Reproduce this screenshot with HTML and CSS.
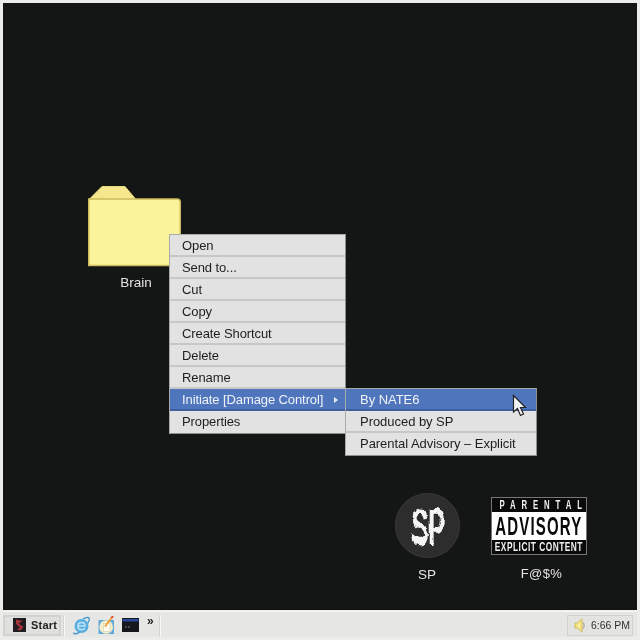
FILE: index.html
```html
<!DOCTYPE html>
<html lang="en">
<head>
  <meta charset="UTF-8" />
  <title>Brain - Desktop</title>
  <link rel="stylesheet" href="styles.css">
</head>
<body>
  <svg class="defs" width="0" height="0">
    <filter id="rough" x="-20%" y="-20%" width="140%" height="140%">
      <feTurbulence type="turbulence" baseFrequency="0.1" numOctaves="2" seed="4"/>
      <feDisplacementMap in="SourceGraphic" scale="4" xChannelSelector="R" yChannelSelector="G"/>
    </filter>
  </svg>

  <div class="screen">
    <div class="desktop">
      <div class="icon icon-folder">
        <svg class="folder-art" width="93" height="81" viewBox="0 0 93 81">
          <path d="M1 13.500 L14 0.500 H37 L48 13.500 Z" fill="#f6e78e" stroke="#e6d67c" stroke-width="1"/>
          <path d="M0.750 13 H89 Q92.250 13 92.250 16 V79.500 H0.750 Z" fill="#fbf39c" stroke="#cdbb5c" stroke-width="1.500"/>
        </svg>
        <span class="icon-label">Brain</span>
      </div>

      <div class="icon icon-sp">
        <div class="sp-logo"><span class="sp-mark">SP</span></div>
        <span class="icon-label">SP</span>
      </div>

      <div class="icon icon-pa">
        <div class="pa-logo">
          <div class="pa-top"><span>PARENTAL</span></div>
          <div class="pa-mid"><span>ADVISORY</span></div>
          <div class="pa-bot"><span>EXPLICIT CONTENT</span></div>
        </div>
        <span class="icon-label pa-label">F@$%</span>
      </div>

      <ul class="menu menu-main">
        <li>Open</li>
        <li>Send to...</li>
        <li>Cut</li>
        <li>Copy</li>
        <li>Create Shortcut</li>
        <li>Delete</li>
        <li>Rename</li>
        <li class="active">Initiate [Damage Control]<span class="arrow"></span></li>
        <li>Properties</li>
      </ul>

      <ul class="menu menu-sub">
        <li class="active">By NATE6</li>
        <li>Produced by SP</li>
        <li>Parental Advisory – Explicit</li>
      </ul>

      <svg class="cursor" width="16" height="24" viewBox="0 0 16 24">
        <path d="M1.500 1.500 V18 L5.500 14.500 L8.500 21.500 L11.500 20 L8.500 13.500 H13.500 Z" fill="#f2f3f6" stroke="#222" stroke-width="1.200"/>
      </svg>
    </div>

    <div class="taskbar">
      <button class="start">
        <svg width="13" height="14" viewBox="0 0 13 14">
          <rect width="13" height="14" fill="#201c20"/>
          <path d="M3 1.500 L9.500 3 L5.500 5.500 L10.500 9 L7.500 12.500 L4 11.500 L7 9.500 L3 6 Z" fill="#a8333c"/>
        </svg>
        <span>Start</span>
      </button>
      <span class="sep"></span>
      <div class="quick">
        <svg width="18" height="19" viewBox="0 0 18 19">
          <path d="M1 16.500 C0 19 5 18 9 14.500 C13 11 17.500 4 16 2 C15 0.800 12.500 1.500 10 3" fill="none" stroke="#3f93cb" stroke-width="1.300"/>
          <circle cx="8.500" cy="10" r="7" fill="#58aee0"/>
          <path d="M5 10 H12 C12 7.500 10.500 6.500 8.500 6.500 C6.300 6.500 5 8 5 10 C5 12.300 6.500 13.800 8.500 13.800 C10 13.800 11 13.300 11.800 12.300" fill="none" stroke="#bfe4f6" stroke-width="1.600"/>
        </svg>
        <svg width="17" height="19" viewBox="0 0 17 19">
          <rect x="0.500" y="4" width="15.500" height="14" fill="#62abd9"/>
          <circle cx="8.200" cy="11" r="6.800" fill="#f8efc6"/>
          <rect x="5.500" y="7.500" width="6.500" height="8" fill="#fdfbee" stroke="#cfcdb8" stroke-width="0.600"/>
          <path d="M7 10.500 L13.500 2" stroke="#eda23c" stroke-width="2"/>
          <path d="M13.500 2 L15 0" stroke="#d9483c" stroke-width="2"/>
        </svg>
        <svg width="17" height="14" viewBox="0 0 17 14">
          <rect width="17" height="14" fill="#15171c"/>
          <rect x="0.500" y="1" width="16" height="2.500" fill="#2c4a9c"/>
          <path d="M3 9 H5 M6 9 H8" stroke="#6f7480" stroke-width="1"/>
        </svg>
        <span class="more">»</span>
      </div>
      <span class="sep"></span>
      <div class="tray">
        <svg width="11" height="15" viewBox="0 0 11 15">
          <path d="M1 5 H3.500 L8 0.800 V14.200 L3.500 10 H1 Z" fill="#f4e27a" stroke="#c8b250" stroke-width="0.800"/>
          <path d="M5 5.500 V9.500" stroke="#fbf6c8" stroke-width="1.500"/>
          <path d="M9.500 4.500 Q10.800 7.500 9.500 10.500" fill="none" stroke="#9a9a80" stroke-width="1"/>
        </svg>
        <span class="clock">6:66 PM</span>
      </div>
    </div>
  </div>
</body>
</html>
```

FILE: styles.css
```css
* {
  box-sizing: border-box;
}

html, body {
  margin: 0;
  padding: 0;
  background: #ececea;
}

body {
  font-family: "Liberation Sans", Arial, sans-serif;
  font-size: 13px;
  color: #222;
}

.defs {
  display: block;
  height: 0;
}

.screen {
  width: 640px;
  height: 640px;
  padding: 3px;
  display: flex;
  flex-direction: column;
  overflow: hidden;
  filter: blur(0.3px);
}

.desktop {
  position: relative;
  flex: 1;
  background: #141515;
  overflow: hidden;
}

/* desktop icons, coordinates are relative to .desktop */
.icon {
  position: absolute;
  display: flex;
  flex-direction: column;
  align-items: center;
}

.icon-label {
  color: #e4e4e4;
  font-size: 13.500px;
  line-height: 16px;
}

.icon-folder {
  left: 85px;
  top: 183px;
  width: 96px;
  gap: 8px;
}

.folder-art {
  align-self: flex-start;
}

.icon-sp {
  left: 391px;
  top: 490px;
  width: 66px;
  gap: 9px;
}

.sp-logo {
  width: 65px;
  height: 65px;
  border-radius: 50%;
  background: #2d2d2d;
  border: 1px solid #3a3a3a;
  display: flex;
  align-items: center;
  justify-content: center;
}

.sp-mark {
  color: #f4f4f4;
  font-weight: bold;
  font-size: 30px;
  line-height: 1;
  letter-spacing: -1px;
  padding: 4px;
  filter: url(#rough);
  transform: scale(0.88, 1.7);
}

.icon-pa {
  left: 488px;
  top: 494px;
  width: 96px;
  gap: 11px;
}

.pa-logo {
  width: 96px;
  height: 58px;
  background: #0a0a0a;
  border: 1px solid #777;
  color: #f2f2f2;
  display: flex;
  flex-direction: column;
  font-weight: bold;
}

.pa-top, .pa-mid, .pa-bot {
  display: flex;
  justify-content: center;
  white-space: nowrap;
}

.pa-top span, .pa-mid span, .pa-bot span {
  flex-shrink: 0;
  display: block;
}

.pa-top {
  height: 14px;
  font-size: 13px;
  line-height: 14px;
}

.pa-top span {
  letter-spacing: 9.800px;
  margin-right: -9.800px;
  transform: scaleX(0.6);
}

.pa-mid {
  height: 28px;
  background: #fff;
  color: #0a0a0a;
  font-size: 25px;
  line-height: 28px;
}

.pa-mid span {
  letter-spacing: 2px;
  transform: scaleX(0.6);
}

.pa-bot {
  flex: 1;
  font-size: 13px;
  line-height: 14px;
}

.pa-bot span {
  letter-spacing: 0.800px;
  transform: scaleX(0.64);
}

.pa-label {
  font-size: 13px;
  letter-spacing: 0.400px;
  margin-left: 5px;
}

/* context menus */
.menu {
  position: absolute;
  margin: 0;
  padding: 0;
  list-style: none;
  background: #e1e2e1;
  border: 1px solid #8d8f8e;
  border-top-color: #a9abaa;
  border-left-color: #a9abaa;
}

.menu li {
  position: relative;
  height: 22px;
  line-height: 22px;
  padding-left: 12px;
  border-bottom: 2px solid #c6c7c6;
  letter-spacing: -0.100px;
  white-space: nowrap;
  color: #1e1e1e;
}

.menu li:last-child {
  border-bottom: none;
}

.menu li.active {
  background: #4f76bd;
  border-bottom-color: #3d5f9e;
  color: #f0f2f8;
}

.menu-main {
  left: 166px;
  top: 231px;
  width: 177px;
}

.menu-sub {
  left: 342px;
  top: 385px;
  width: 192px;
}

.menu-sub li {
  padding-left: 14px;
  letter-spacing: -0.040px;
}

.arrow {
  position: absolute;
  right: 7px;
  top: 8px;
  border-left: 4px solid #e8ecf6;
  border-top: 3px solid transparent;
  border-bottom: 3px solid transparent;
}

.cursor {
  position: absolute;
  left: 509px;
  top: 391px;
}

/* taskbar */
.taskbar {
  height: 26px;
  margin-top: 1px;
  display: flex;
  align-items: center;
  background: #e6e7e4;
  border-top: 1px solid #f6f6f4;
  padding: 1px 0 0 0;
}

.start {
  width: 58px;
  height: 21px;
  display: flex;
  align-items: center;
  gap: 5px;
  padding: 0 0 0 8px;
  background: #e0e1de;
  border: 2px solid #d2d3d0;
  font-family: "Liberation Sans", Arial, sans-serif;
  font-weight: bold;
  font-size: 11px;
  letter-spacing: 0.200px;
  color: #222;
}

.sep {
  width: 2px;
  height: 21px;
  margin-left: 2px;
  background: #d4d5d2;
  border-right: 1px solid #f8f8f6;
}

.quick {
  display: flex;
  align-items: center;
  gap: 7px;
  width: 92px;
  padding-left: 8px;
}

.more {
  font-size: 12px;
  line-height: 12px;
  font-weight: bold;
  margin: -8px 0 0 1px;
}

.tray {
  margin-left: auto;
  margin-right: 4px;
  width: 66px;
  height: 21px;
  display: flex;
  align-items: center;
  gap: 6px;
  padding-left: 6px;
  border: 1px solid #d2d3d0;
  background: #e3e4e1;
}

.clock {
  font-size: 10.500px;
  color: #333;
  white-space: nowrap;
}
```
